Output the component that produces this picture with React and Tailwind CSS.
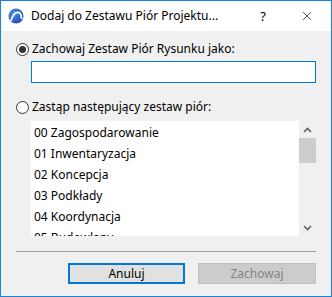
import { X } from "lucide-react";

const penSets = [
  "00 Zagospodarowanie",
  "01 Inwentaryzacja",
  "02 Koncepcja",
  "03 Podkłady",
  "04 Koordynacja",
  "05 Budowlany",
];

export default function App() {
  return (
    <div className="flex h-[297px] w-[332px] flex-col border border-[#1883d7] bg-[#f0f0f0] text-[12px] text-black" style={{ fontFamily: '"Noto Sans", "Open Sans", sans-serif' }}>
      <div className="flex h-[30px] shrink-0 items-center bg-white">
        <AppIcon />
        <span className="ml-[7px] leading-none">Dodaj do Zestawu Piór Projektu...</span>
        <span className="ml-auto mr-[34px] text-[13px] leading-none">?</span>
        <X size={14} strokeWidth={1.2} className="mr-[17px]" />
      </div>

      <div className="flex flex-col px-[15px]">
        <Radio checked label="Zachowaj Zestaw Piór Rysunku jako:" className="mt-[10px]" />
        <div className="ml-[15px] mt-[4px] h-[22px] border border-[#0078d7] bg-white" />

        <Radio label="Zastąp następujący zestaw piór:" className="mt-[16px]" />
        <div className="ml-[15px] mt-[6px] flex h-[115px] overflow-hidden bg-white">
          <div className="flex-1 overflow-hidden pt-px pl-[3px]">
            {penSets.map((name) => (
              <div key={name} className="flex h-[21px] items-center whitespace-nowrap">
                {name}
              </div>
            ))}
          </div>
          <div className="flex w-[17px] flex-col bg-[#f0f0f0]">
            <div className="flex h-[17px] items-center justify-center">
              <Chevron up />
            </div>
            <div className="h-[25px] bg-[#cdcdcd]" />
            <div className="flex-1" />
            <div className="flex h-[17px] items-center justify-center">
              <Chevron />
            </div>
          </div>
        </div>

        <div className="mt-[15px] h-px bg-[#a0a0a0]" />

        <div className="mt-[11px] flex justify-end gap-[13px]">
          <button className="h-[21px] w-[117px] border-2 border-[#0078d7] bg-[#e1e1e1] leading-none">Anuluj</button>
          <button className="h-[21px] w-[118px] border border-[#bfbfbf] bg-[#cccccc] leading-none text-[#838383]">Zachowaj</button>
        </div>
      </div>
    </div>
  );
}

function Radio({ checked, label, className = "" }) {
  return (
    <div className={`flex h-[16px] items-center ${className}`}>
      <span className="flex h-[13px] w-[13px] items-center justify-center rounded-full border border-[#333333] bg-white">
        {checked && <span className="h-[7px] w-[7px] rounded-full bg-[#333333]" />}
      </span>
      <span className="ml-[3px] leading-none">{label}</span>
    </div>
  );
}

function Chevron({ up }) {
  return (
    <svg width="9" height="6" viewBox="0 0 9 6">
      <path d={up ? "M1 5 L4.5 1.5 L8 5" : "M1 1 L4.5 4.5 L8 1"} fill="none" stroke="#606060" strokeWidth="1.6" />
    </svg>
  );
}

function AppIcon() {
  return (
    <svg width="16" height="16" viewBox="0 0 16 16" className="ml-[7px]">
      <defs>
        <radialGradient id="g" cx="35%" cy="35%" r="70%">
          <stop offset="0%" stopColor="#4f8ef0" />
          <stop offset="100%" stopColor="#1c4fb8" />
        </radialGradient>
      </defs>
      <circle cx="8" cy="8" r="7.5" fill="url(#g)" />
      <path d="M3 13 Q5.5 3.5 11 4.5 Q13.5 5.5 13.5 11" fill="none" stroke="white" strokeWidth="1.8" />
    </svg>
  );
}
